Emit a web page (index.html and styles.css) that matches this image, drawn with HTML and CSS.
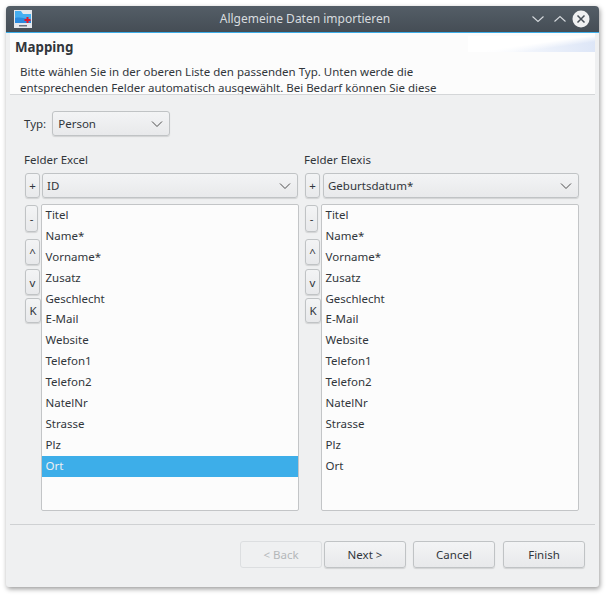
FILE: index.html
```html
<!DOCTYPE html>
<html lang="de">
<head>
    <meta charset="UTF-8">
    <meta name="viewport" content="width=device-width, initial-scale=1.0">
    <title>Allgemeine Daten importieren</title>
    <link rel="stylesheet" href="styles.css">
</head>
<body>
    <div class="window">
        <div class="titlebar">
            <svg class="app-icon" width="18" height="18" viewBox="0 0 18 18">
                <rect width="18" height="18" fill="#e4e7ec"/>
                <path d="M1 1h6l2 3h8v9H1z" fill="#45aef0"/>
                <path d="M1 8c5-1 10 0 16 2v3H1z" fill="#2a8ade"/>
                <path d="M10.500 9h2V7h2v2h2v2h-2v2h-2v-2h-2z" fill="#e0182c"/>
                <rect x="5" y="15" width="8" height="1.500" fill="#6a7280"/>
            </svg>
            <div class="title">Allgemeine Daten importieren</div>
            <div class="win-controls">
                <svg width="16" height="16" viewBox="0 0 16 16"><path d="M2.500 5.500 8 10.500l5.500-5" fill="none" stroke="#d5d9dd" stroke-width="1.100"/></svg>
                <svg width="16" height="16" viewBox="0 0 16 16"><path d="M2.500 10.500 8 5.500l5.500 5" fill="none" stroke="#d5d9dd" stroke-width="1.100"/></svg>
                <svg class="win-close" width="18" height="18" viewBox="0 0 18 18"><circle cx="9" cy="9" r="8.500" fill="#eff0f1"/><path d="M5.500 5.500l7 7m0-7-7 7" stroke="#474f57" stroke-width="1.500"/></svg>
            </div>
        </div>

        <div class="content">
            <div class="banner">
                <h1>Mapping</h1>
                <p>Bitte wählen Sie in der oberen Liste den passenden Typ. Unten werde die<br>entsprechenden Felder automatisch ausgewählt. Bei Bedarf können Sie diese</p>
            </div>

            <div class="type-row">
                <label>Typ:</label>
                <div class="combo type-combo">
                    <span>Person</span>
                    <svg width="12" height="8" viewBox="0 0 12 8"><path d="M1 1.500 6 6.500l5-5" fill="none" stroke="#4d4d4d" stroke-width="1"/></svg>
                </div>
            </div>

            <div class="columns">
                <div class="column">
                    <div class="column-title">Felder Excel</div>
                    <div class="combo-row">
                        <button class="tool tool-plus">+</button>
                        <div class="combo field-combo">
                            <span>ID</span>
                            <svg width="12" height="8" viewBox="0 0 12 8"><path d="M1 1.500 6 6.500l5-5" fill="none" stroke="#4d4d4d" stroke-width="1"/></svg>
                        </div>
                    </div>
                    <div class="list-row">
                        <div class="tools">
                            <button class="tool tool-minus">-</button>
                            <button class="tool tool-up">^</button>
                            <button class="tool tool-down">v</button>
                            <button class="tool tool-k">K</button>
                        </div>
                        <ul class="list">
                            <li>Titel</li>
                            <li>Name*</li>
                            <li>Vorname*</li>
                            <li>Zusatz</li>
                            <li>Geschlecht</li>
                            <li>E-Mail</li>
                            <li>Website</li>
                            <li>Telefon1</li>
                            <li>Telefon2</li>
                            <li>NatelNr</li>
                            <li>Strasse</li>
                            <li>Plz</li>
                            <li class="selected">Ort</li>
                        </ul>
                    </div>
                </div>

                <div class="column column-right">
                    <div class="column-title">Felder Elexis</div>
                    <div class="combo-row">
                        <button class="tool tool-plus">+</button>
                        <div class="combo field-combo">
                            <span>Geburtsdatum*</span>
                            <svg width="12" height="8" viewBox="0 0 12 8"><path d="M1 1.500 6 6.500l5-5" fill="none" stroke="#4d4d4d" stroke-width="1"/></svg>
                        </div>
                    </div>
                    <div class="list-row">
                        <div class="tools">
                            <button class="tool tool-minus">-</button>
                            <button class="tool tool-up">^</button>
                            <button class="tool tool-down">v</button>
                            <button class="tool tool-k">K</button>
                        </div>
                        <ul class="list">
                            <li>Titel</li>
                            <li>Name*</li>
                            <li>Vorname*</li>
                            <li>Zusatz</li>
                            <li>Geschlecht</li>
                            <li>E-Mail</li>
                            <li>Website</li>
                            <li>Telefon1</li>
                            <li>Telefon2</li>
                            <li>NatelNr</li>
                            <li>Strasse</li>
                            <li>Plz</li>
                            <li>Ort</li>
                        </ul>
                    </div>
                </div>
            </div>

            <div class="separator"></div>

            <div class="buttons">
                <button class="btn" disabled>&lt; Back</button>
                <button class="btn btn-next">Next &gt;</button>
                <button class="btn btn-cancel">Cancel</button>
                <button class="btn btn-finish">Finish</button>
            </div>
        </div>
    </div>
</body>
</html>
```

FILE: styles.css
```css
* {
    box-sizing: border-box;
}

html, body {
    height: 100%;
}

body {
    margin: 0;
    padding: 6px 11px 12px 6px;
    background-color: #fff;
    font-family: "Noto Sans", sans-serif;
    font-size: 11.5px;
    color: #31363b;
    overflow: hidden;
}

.window {
    width: 593px;
    height: 581px;
    background-color: #eff0f1;
    border-radius: 4px 4px 3px 3px;
    box-shadow: 1px 2px 5px rgba(0, 0, 0, 0.4);
    overflow: hidden;
}

.titlebar {
    display: flex;
    align-items: center;
    height: 27px;
    padding: 0 9px 1px 8px;
    background: linear-gradient(#545e67, #454d55);
    border-bottom: 1px solid #3daee9;
    color: #d8dcdf;
    font-size: 12px;
}

.app-icon {
    flex: none;
}

.title {
    flex: 1;
    text-align: center;
    padding-left: 48px;
}

.win-controls {
    display: flex;
    align-items: center;
    gap: 6px;
}

.win-close {
    margin-left: -2px;
}

.content {
    padding: 0 4px;
}

.banner {
    height: 62px;
    overflow: hidden;
    background-color: #fcfcfc;
    background-image: linear-gradient(172deg, #fff 50%, rgba(255, 255, 255, 0) 70%), linear-gradient(90deg, #fff 10%, #dde6f7);
    background-size: 127px 16px;
    background-position: right 3px;
    background-repeat: no-repeat;
    border-bottom: 1px solid #d4d6d8;
}

.banner h1 {
    margin: 0;
    padding: 6px 0 0 5px;
    font-size: 13.3px;
    line-height: 17px;
    font-weight: 700;
}

.banner p {
    margin: 8px 0 0;
    padding-left: 10px;
    line-height: 16px;
}

.type-row {
    display: flex;
    align-items: center;
    gap: 6px;
    padding: 16px 0 0 14px;
}

.combo {
    display: flex;
    align-items: center;
    justify-content: space-between;
    height: 25px;
    padding: 0 6px 0 5px;
    background: linear-gradient(#f3f4f5, #e8e9eb);
    border: 1px solid #c0c3c5;
    border-radius: 3px;
    box-shadow: 0 1px 1px rgba(0, 0, 0, 0.12);
}

.type-combo {
    width: 118px;
}

.columns {
    display: flex;
    gap: 4px;
    padding: 16px 0 0 14px;
}

.column {
    width: 276px;
}

.column-title {
    height: 16px;
    line-height: 16px;
    margin-bottom: 5px;
}

.combo-row {
    display: flex;
    gap: 2px;
    margin-left: 1px;
}

.column-right .combo-row {
    gap: 3px;
}

.field-combo {
    width: 256px;
    padding-left: 4px;
}

.list-row {
    display: flex;
    margin-top: 6px;
    margin-left: 1px;
}

.tools {
    width: 16px;
    flex: none;
    display: flex;
    flex-direction: column;
    padding-top: 1px;
}

.tool {
    padding: 0;
    height: 26px;
    width: 15px;
    background: linear-gradient(#f3f4f5, #e8e9eb);
    border: 1px solid #c0c3c5;
    border-radius: 3px;
    box-shadow: 0 1px 1px rgba(0, 0, 0, 0.12);
    font-family: inherit;
    font-size: 11.5px;
    color: #31363b;
}

.tool-plus {
    height: 25px;
    flex: none;
}

.tool-minus {
    width: 13px;
    height: 27px;
    margin-bottom: 7px;
}

.tool-up {
    margin-bottom: 4px;
}

.tool-down {
    margin-bottom: 3px;
}

.tool-k {
    width: 16px;
    height: 25px;
}

.list {
    list-style: none;
    margin: 0;
    padding: 0;
    width: 258px;
    height: 307px;
    background-color: #fcfcfc;
    border: 1px solid #c3c5c7;
    border-radius: 2px;
}

.list li {
    height: 20.9px;
    line-height: 20px;
    padding-left: 3.500px;
}

.list li.selected {
    background-color: #3daee9;
    color: #eff0f1;
}

.separator {
    height: 1px;
    margin-top: 13px;
    background-color: #cfd1d3;
}

.buttons {
    display: flex;
    padding: 16px 0 0 230px;
}

.btn {
    width: 82px;
    height: 27px;
    padding: 0 0 1px;
    background: linear-gradient(#f3f4f5, #e8e9eb);
    border: 1px solid #c0c3c5;
    border-radius: 3px;
    box-shadow: 0 1px 1px rgba(0, 0, 0, 0.12);
    font-family: inherit;
    font-size: 11.5px;
    color: #31363b;
}

.btn:disabled {
    background: #eff0f1;
    border-color: #dcdee0;
    box-shadow: none;
    color: #b4b7b9;
}

.btn-next {
    margin-left: 2px;
}

.btn-cancel {
    margin-left: 7px;
}

.btn-finish {
    margin-left: 8px;
}
```
